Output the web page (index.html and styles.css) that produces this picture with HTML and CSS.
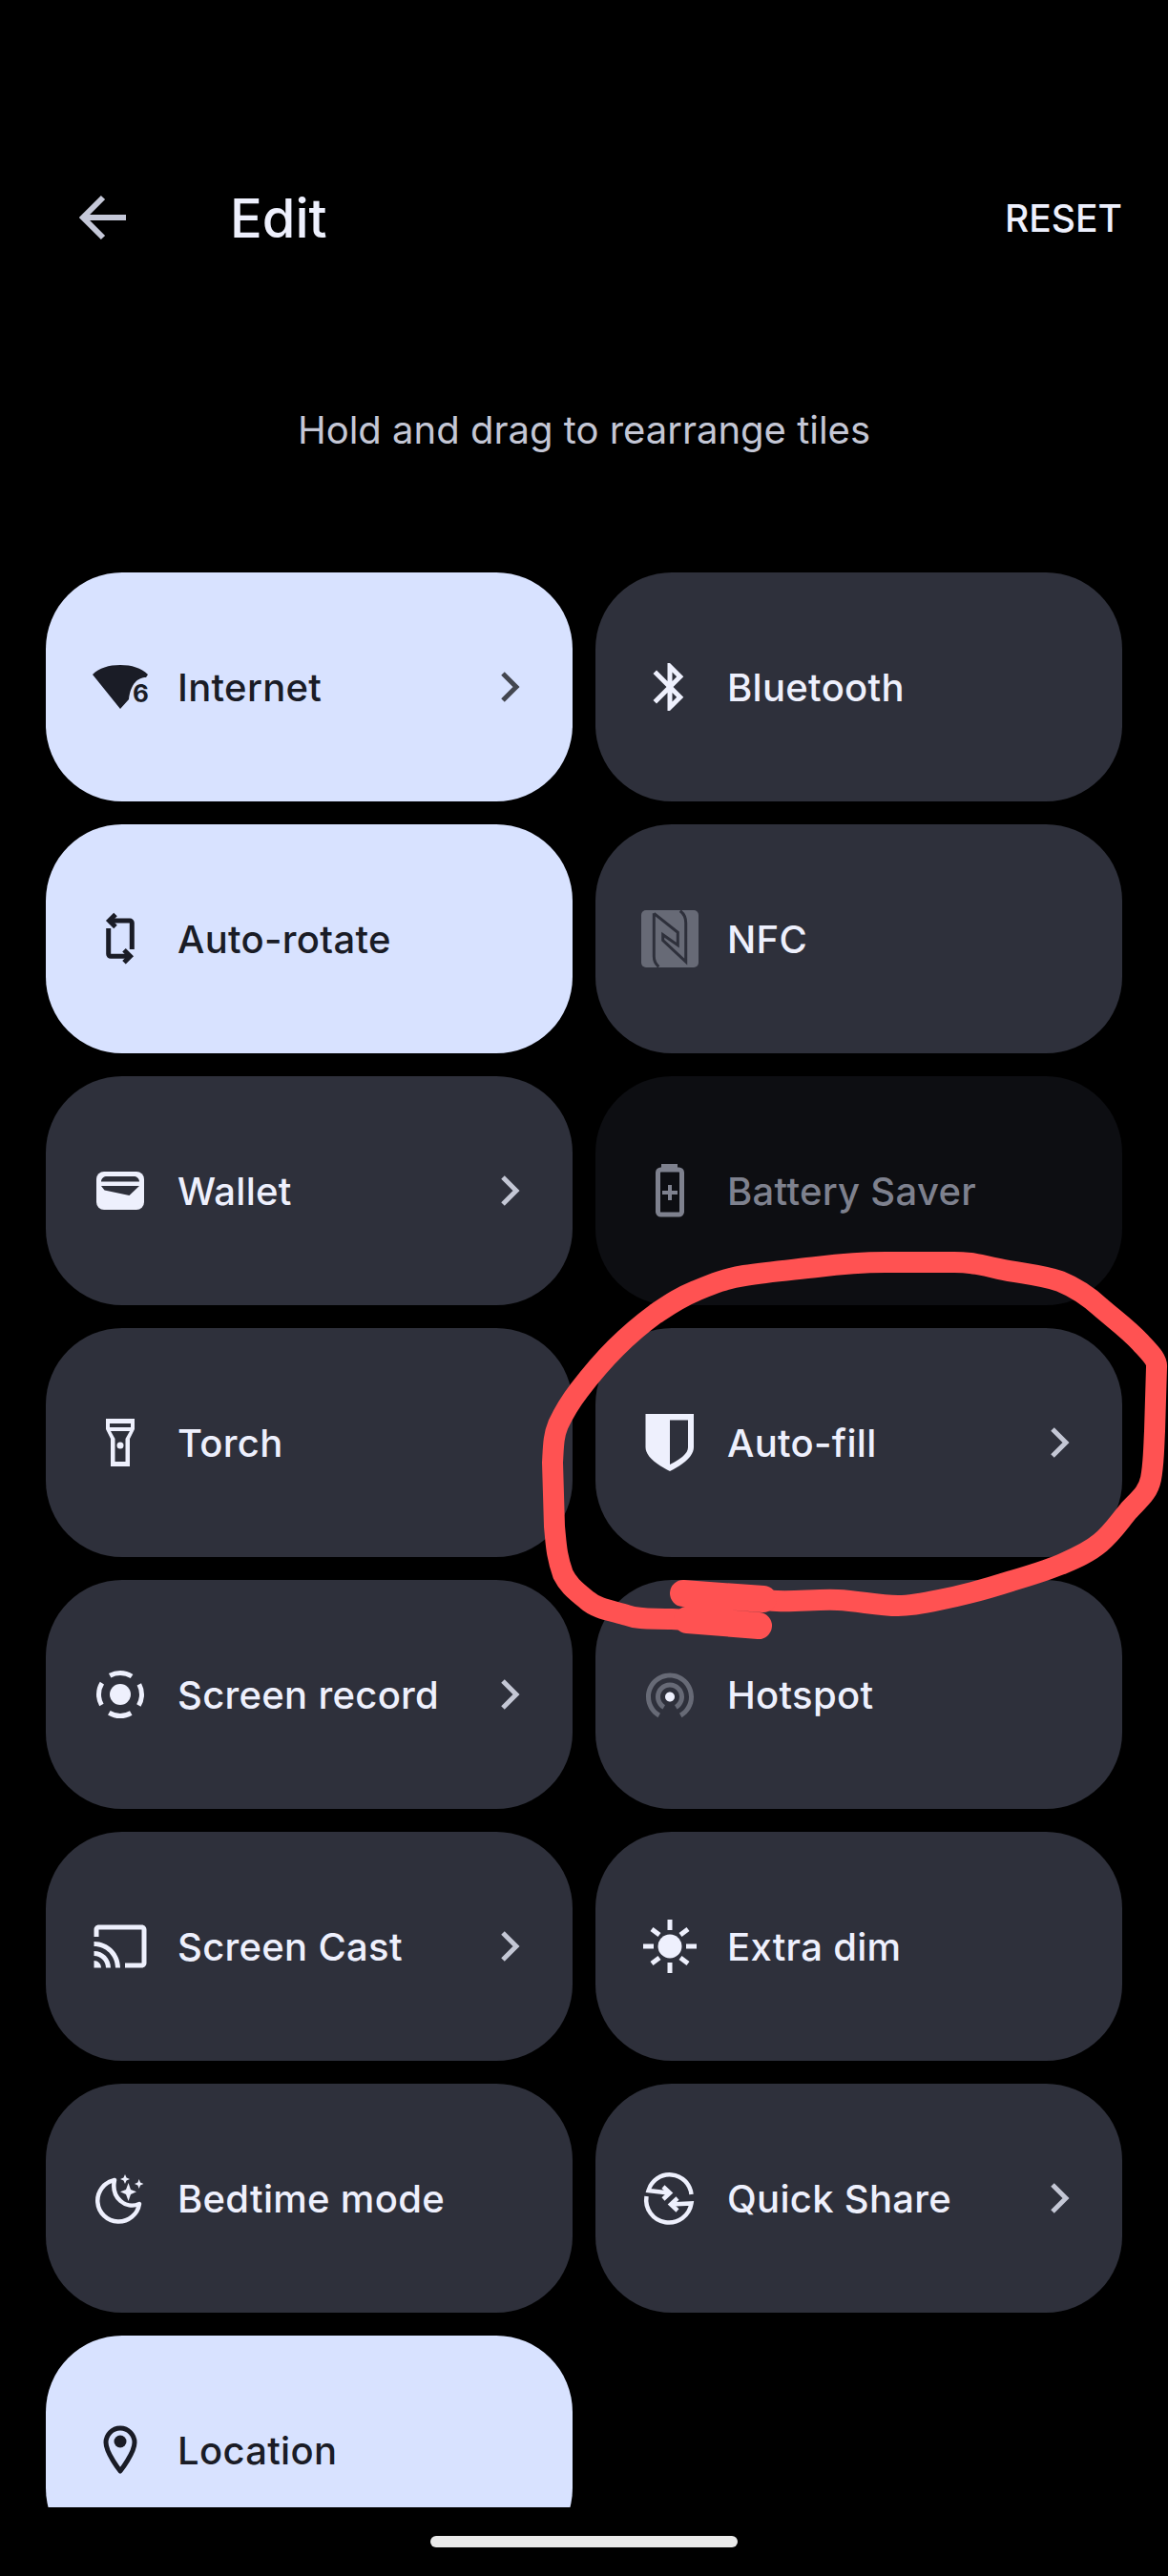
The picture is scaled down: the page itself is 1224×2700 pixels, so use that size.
FILE: index.html
```html
<!DOCTYPE html>
<html lang="en">
<head>
  <meta charset="UTF-8">
  <title>Edit</title>
  <link rel="stylesheet" href="styles.css">
</head>
<body>

  <div class="pantalla">
    <header class="barra">
      <svg class="flecha" viewBox="0 0 60 60"><path d="M54 30H9M30 9 9 30l21 21" fill="none" stroke="currentColor" stroke-width="6"/></svg>
      <h1>Edit</h1>
      <span class="reset">RESET</span>
    </header>

    <p class="ayuda">Hold and drag to rearrange tiles</p>

    <div class="rejilla">

      <div class="tile activo">
        <svg class="icono" viewBox="0 0 60 60"><path d="M1 17C8 10 18 7 30 7s22 3 29 10l-2 3C49 20 41 26 39 43l-9 10z" fill="currentColor"/><text x="43" y="46" class="seis">6</text></svg>
        <span class="nombre">Internet</span>
        <svg class="chevron" viewBox="0 0 36 36"><path d="M11 4l14 14L11 32" fill="none" stroke="currentColor" stroke-width="5"/></svg>
      </div>

      <div class="tile">
        <svg class="icono" viewBox="0 0 24 24"><path d="M17.71 7.71L12 2h-1v7.59L6.41 5 5 6.41 10.59 12 5 17.59 6.41 19 11 14.41V22h1l5.71-5.71-4.3-4.29 4.3-4.29zM13 5.83l1.88 1.88L13 9.59V5.83zm1.88 10.46L13 18.17v-3.76l1.88 1.88z" fill="currentColor"/></svg>
        <span class="nombre">Bluetooth</span>
      </div>

      <div class="tile activo">
        <svg class="icono" viewBox="0 0 60 60"><g fill="none" stroke="currentColor" stroke-width="5"><path d="M20 11H40a2.300 2.300 0 0 1 2.300 2.300V41"/><path d="M17.700 19V46a2.300 2.300 0 0 0 2.300 2.300H41"/><path d="M25 4.500 18.500 11 25 17.500M34 41.800 40.500 48.300 34 54.800"/></g></svg>
        <span class="nombre">Auto-rotate</span>
      </div>

      <div class="tile">
        <svg class="icono" viewBox="0 0 60 60"><rect width="60" height="60" rx="5" fill="#676a76"/><path d="M13.300 3.300 38.300 23.300V36.700L22.700 25.700V31.700L46.700 54V13.300Q46.700 5 40.700.7M13.300 3.300V48.300Q13.300 55 18.300 59.300" fill="none" stroke="#2e303b" stroke-width="3"/></svg>
        <span class="nombre">NFC</span>
      </div>

      <div class="tile">
        <svg class="icono" viewBox="0 0 60 60"><rect x="5" y="10" width="50" height="40" rx="8" fill="currentColor"/><path d="M10 20.500C10 17 13 15 16 15H44C47 15 50 17 50 20.500zM10 25H50L39.500 35 13.500 29.500z" fill="#2e303b"/></svg>
        <span class="nombre">Wallet</span>
        <svg class="chevron" viewBox="0 0 36 36"><path d="M11 4l14 14L11 32" fill="none" stroke="currentColor" stroke-width="5"/></svg>
      </div>

      <div class="tile apagado">
        <svg class="icono" viewBox="0 0 60 60"><path d="M21 8V2H38V8" fill="currentColor"/><rect x="17.500" y="8" width="25" height="47" rx="3" fill="none" stroke="currentColor" stroke-width="5"/><path d="M30 24V40M22 32H38" stroke="currentColor" stroke-width="4"/></svg>
        <span class="nombre">Battery Saver</span>
      </div>

      <div class="tile">
        <svg class="icono" viewBox="0 0 60 60"><path d="M15 5H45V16L40 26V55H20V26L15 16z" fill="currentColor"/><path d="M19 10H41V14H19zM20 18H40L35.500 26V50H24.500V26z" fill="#2e303b"/><circle cx="30" cy="33" r="3.500" fill="currentColor"/></svg>
        <span class="nombre">Torch</span>
      </div>

      <div class="tile">
        <svg class="icono" viewBox="0 0 60 60"><path d="M4.500 0H55V35C55 45 42 54 30 60 18 54 4.500 45 4.500 35z" fill="currentColor"/><path d="M30 6.500H49V35C49 42 40 48 30 53z" fill="#2e303b"/></svg>
        <span class="nombre">Auto-fill</span>
        <svg class="chevron" viewBox="0 0 36 36"><path d="M11 4l14 14L11 32" fill="none" stroke="currentColor" stroke-width="5"/></svg>
      </div>

      <div class="tile">
        <svg class="icono" viewBox="0 0 60 60"><circle cx="30" cy="30" r="22.500" fill="none" stroke="currentColor" stroke-width="5" stroke-dasharray="24 11.350" stroke-dashoffset="12"/><circle cx="30" cy="30" r="11" fill="currentColor"/></svg>
        <span class="nombre">Screen record</span>
        <svg class="chevron" viewBox="0 0 36 36"><path d="M11 4l14 14L11 32" fill="none" stroke="currentColor" stroke-width="5"/></svg>
      </div>

      <div class="tile">
        <svg class="icono" viewBox="0 0 24 24"><path d="M12 11c-1.100 0-2 .9-2 2s.9 2 2 2 2-.9 2-2-.9-2-2-2z" fill="currentColor"/><path d="M18 13c0-3.310-2.690-6-6-6s-6 2.690-6 6c0 2.220 1.210 4.150 3 5.190l1-1.740c-1.190-.7-2-1.970-2-3.450 0-2.210 1.790-4 4-4s4 1.790 4 4c0 1.480-.81 2.750-2 3.450l1 1.740c1.790-1.040 3-2.970 3-5.190zM12 3C6.480 3 2 7.480 2 13c0 3.700 2.010 6.920 4.990 8.650l1-1.730C5.610 18.530 4 15.960 4 13c0-4.420 3.580-8 8-8s8 3.580 8 8c0 2.960-1.610 5.530-4 6.920l1 1.730c2.990-1.730 5-4.950 5-8.650 0-5.520-4.480-10-10-10z" fill="#676a76"/></svg>
        <span class="nombre">Hotspot</span>
      </div>

      <div class="tile">
        <svg class="icono" viewBox="0 0 24 24"><path d="M21 3H3c-1.100 0-2 .9-2 2v3h2V5h18v14h-7v2h7c1.100 0 2-.9 2-2V5c0-1.100-.9-2-2-2zM1 18v3h3c0-1.660-1.340-3-3-3zm0-4v2c2.760 0 5 2.240 5 5h2c0-3.870-3.130-7-7-7zm0-4v2c4.970 0 9 4.030 9 9h2c0-6.080-4.930-11-11-11z" fill="currentColor"/></svg>
        <span class="nombre">Screen Cast</span>
        <svg class="chevron" viewBox="0 0 36 36"><path d="M11 4l14 14L11 32" fill="none" stroke="currentColor" stroke-width="5"/></svg>
      </div>

      <div class="tile">
        <svg class="icono" viewBox="0 0 60 60"><circle cx="30" cy="30" r="12.500" fill="currentColor"/><path d="M30 2V13M30 47V58M2 30H13M47 30H58M11 12 19 18M49 12 41 18M11 48 19 42M49 48 41 42" stroke="currentColor" stroke-width="5" fill="none"/></svg>
        <span class="nombre">Extra dim</span>
      </div>

      <div class="tile">
        <svg class="icono" viewBox="0 0 60 60"><path d="M24 11A22 22 0 1 0 50 36C36 42 20 30 24 11z" fill="none" stroke="currentColor" stroke-width="4.500" stroke-linejoin="round"/><path d="M38.600 14 41 21 47 23.300 41 26 38.600 33 36 26 30 23.300 36 21zM35 5 36.500 8.500 40 10 36.500 11.500 35 15 33.500 11.500 30 10 33.500 8.500zM49.700 10 51 13.500 54.500 15 51 16.500 49.700 20 48.400 16.500 45 15 48.400 13.500z" fill="currentColor"/></svg>
        <span class="nombre">Bedtime mode</span>
      </div>

      <div class="tile">
        <svg class="icono" viewBox="0 0 60 60"><g fill="none" stroke="currentColor" stroke-width="4.500"><path d="M29 24.500 7.500 22A23 23 0 0 1 52.500 26"/><path d="M31 36.500 52.500 35.500A23 23 0 0 1 5.500 28"/><path d="M23 18 30 24.500 23 31M38 30 31 36.500 38 43"/></g></svg>
        <span class="nombre">Quick Share</span>
        <svg class="chevron" viewBox="0 0 36 36"><path d="M11 4l14 14L11 32" fill="none" stroke="currentColor" stroke-width="5"/></svg>
      </div>

      <div class="tile activo">
        <svg class="icono" viewBox="0 0 60 60"><path d="M30 52C30 52 15 33 15 22A15 15 0 0 1 45 22C45 33 30 52 30 52z" fill="none" stroke="currentColor" stroke-width="5" stroke-linejoin="round"/><circle cx="30" cy="21" r="6.500" fill="currentColor"/></svg>
        <span class="nombre">Location</span>
      </div>

    </div>

    <div class="inicio"></div>

    <!-- trazo a mano sobre la captura -->
    <svg class="trazo" viewBox="0 0 1224 2700">
      <path d="M795 1705C760 1705 740 1699 704 1697 685 1696 670 1698 657 1693 640 1688 625 1686 615 1677 600 1665 595 1660 590 1650 583 1630 583 1620 581 1600L579 1533C580 1515 580 1505 585 1493 592 1478 597 1470 607 1457 620 1440 630 1428 645 1413 660 1398 672 1388 687 1377 702 1367 712 1360 729 1353 746 1346 760 1340 780 1337 805 1333 830 1331 856 1328 880 1325 905 1323 928 1323H1000C1017 1323 1030 1326 1047 1330 1070 1335 1090 1336 1111 1343 1128 1350 1140 1358 1153 1370 1168 1383 1182 1393 1195 1407 1204 1417 1213 1425 1212 1433L1210 1500C1209 1520 1209 1535 1206 1550 1203 1565 1193 1572 1183 1583 1172 1596 1166 1606 1153 1617 1140 1628 1125 1634 1111 1640 1094 1647 1077 1652 1060 1657 1035 1665 1010 1672 984 1677 970 1680 955 1683 941 1683 920 1683 900 1678 878 1677 857 1676 835 1679 814 1678 780 1676 750 1670 715 1668" fill="none" stroke="#ff5252" stroke-width="22" stroke-linecap="round" stroke-linejoin="round"/>
      <path d="M795 1704 720 1698M716 1670 800 1676" fill="none" stroke="#ff5252" stroke-width="28" stroke-linecap="round"/>
    </svg>
  </div>

</body>
</html>
```

FILE: styles.css
```css
html, body {
  margin: 0;
  padding: 0;
  background-color: #000000;
}

.pantalla {
  position: relative;
  width: 1224px;
  height: 2700px;
  overflow: hidden;
  font-family: Inter, "Noto Sans", sans-serif;
  color: #eef0fd;
}

.barra {
  display: flex;
  align-items: center;
  height: 96px;
  padding: 180px 48px 0 78px;
}

.flecha {
  width: 60px;
  height: 60px;
  color: #c5c8d8;
}

h1 {
  margin: 2px 0 0 103px;
  flex: 1;
  font-size: 56px;
  font-weight: 500;
}

.reset {
  font-size: 39px;
  font-weight: 500;
}

.ayuda {
  margin: 0;
  padding-top: 151px;
  height: 48px;
  line-height: 48px;
  text-align: center;
  font-size: 40px;
  color: #c4c7d5;
}

.rejilla {
  display: grid;
  grid-template-columns: 552px 552px;
  grid-auto-rows: 240px;
  gap: 24px;
  height: 2028px;
  margin-top: 125px;
  padding: 0 48px;
  overflow: hidden;
}

.tile {
  display: flex;
  align-items: center;
  gap: 30px;
  padding: 0 48px;
  background-color: #2e303b;
  border-radius: 80px;
}

.activo {
  background-color: #d8e2ff;
  color: #1a1c26;
}

.apagado {
  background-color: #0d0e12;
  color: #7e818e;
}

.icono {
  width: 60px;
  height: 60px;
  flex: none;
}

.nombre {
  flex: 1;
  font-size: 40px;
  font-weight: 500;
  letter-spacing: 0.3px;
}

.chevron {
  width: 36px;
  height: 36px;
  flex: none;
  color: #c4c7d5;
}

.activo .chevron {
  color: #43464f;
}

.seis {
  font-size: 26px;
  font-weight: 700;
  fill: currentColor;
}

.inicio {
  width: 322px;
  height: 12px;
  margin: 30px auto 0;
  background-color: #eaeaea;
  border-radius: 6px;
}

.trazo {
  position: absolute;
  top: 0;
  left: 0;
  width: 1224px;
  height: 2700px;
}
```
